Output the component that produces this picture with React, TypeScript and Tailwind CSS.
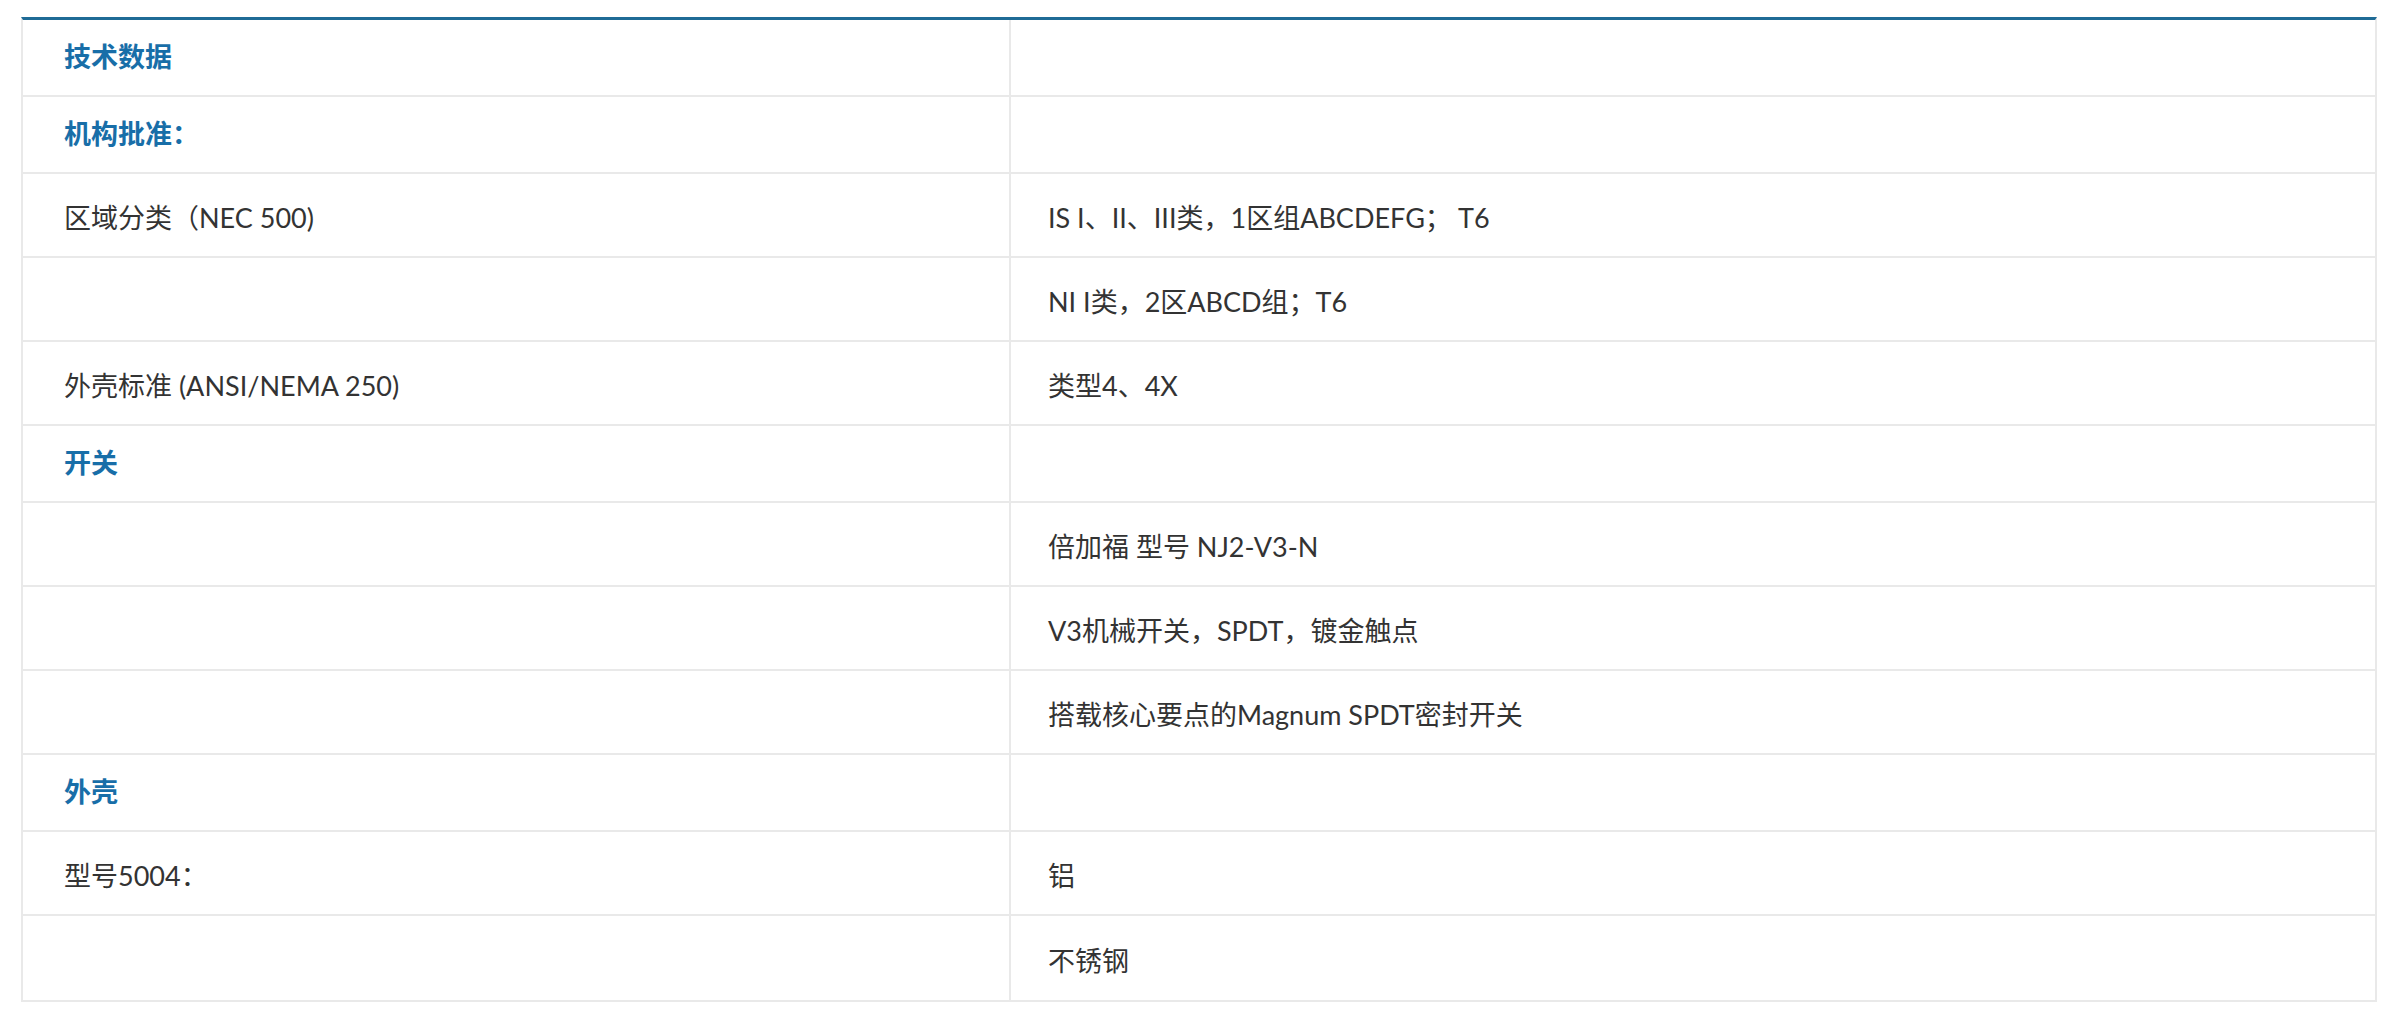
type Row = { kind: "head"; label: string } | { kind: "data"; left: string; right: string };

const ROWS: Row[] = [
  { kind: "head", label: "技术数据" },
  { kind: "head", label: "机构批准：" },
  { kind: "data", left: "区域分类（NEC 500)", right: "IS I、II、III类，1区组ABCDEFG； T6" },
  { kind: "data", left: "", right: "NI I类，2区ABCD组；T6" },
  { kind: "data", left: "外壳标准 (ANSI/NEMA 250)", right: "类型4、4X" },
  { kind: "head", label: "开关" },
  { kind: "data", left: "", right: "倍加福 型号 NJ2-V3-N" },
  { kind: "data", left: "", right: "V3机械开关，SPDT，镀金触点" },
  { kind: "data", left: "", right: "搭载核心要点的Magnum SPDT密封开关" },
  { kind: "head", label: "外壳" },
  { kind: "data", left: "型号5004：", right: "铝" },
  { kind: "data", left: "", right: "不锈钢" },
];

export default function App() {
  return (
    <div className="min-h-screen bg-white pt-[17px] pl-[21px] pr-[8px] font-['Lato','Noto_Sans_CJK_SC',sans-serif] text-[27px] text-[#333333]">
      <div className="border-t-[3px] border-t-[#1f6b96] border-x-2 border-b-2 border-x-[#e9e9e9] border-b-[#e9e9e9]">
        {ROWS.map((row, i) => {
          const last = i === ROWS.length - 1;
          const isHead = row.kind === "head";
          return (
            <div
              key={i}
              className={`grid grid-cols-[988px_1fr] ${last ? "" : "border-b-2 border-[#e9e9e9]"} ${isHead ? "h-[77px]" : "h-[84px]"}`}
            >
              <div className={`flex items-center border-r-2 border-[#e9e9e9] pl-[41px] ${isHead ? "" : "pt-[6px]"}`}>
                {isHead ? (
                  <span className="font-bold text-[#186ea8]">{row.label}</span>
                ) : (
                  <span>{row.left}</span>
                )}
              </div>
              <div className={`flex items-center pl-[37px] ${isHead ? "" : "pt-[6px]"}`}>
                {!isHead && <span>{row.right}</span>}
              </div>
            </div>
          );
        })}
      </div>
    </div>
  );
}
